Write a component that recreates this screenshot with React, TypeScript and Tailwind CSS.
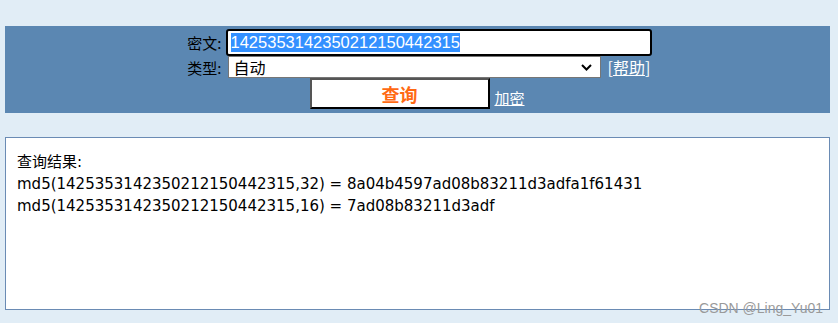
export default function App() {
  const cipher = "1425353142350212150442315";
  return (
    <div className="h-[323px] w-[838px] overflow-hidden bg-[#e1edf6] pt-[26px] font-['Noto_Sans_CJK_SC',sans-serif] text-[14px] text-black">
      <div className="ml-[5px] flex h-[87px] w-[825px] justify-center bg-[#5b87b2]">
        <div className="flex w-[468px] flex-col pt-[3px]">
          <div className="flex h-[27px] items-center">
            <span className="w-[38px] text-right text-[15px] leading-none">密文:</span>
            <div className="ml-[4px] flex h-[27px] w-[426px] items-center rounded-[3px] border-2 border-black bg-white pl-[3px]">
              <span className="bg-[#3390ff] font-['Liberation_Sans',sans-serif] text-[16.5px] leading-[19px] text-white">
                {cipher}
              </span>
            </div>
          </div>
          <div className="flex h-[22px] items-center">
            <span className="w-[38px] text-right text-[15px] leading-none">类型:</span>
            <div className="ml-[6px] flex h-[22px] w-[373px] items-center justify-between border border-[#767676] bg-white pl-[5px] pr-[8px]">
              <span className="text-[16px] leading-none">自动</span>
              <svg width="11" height="7" viewBox="0 0 11 7">
                <path d="M1 1l4.5 4.5L10 1" fill="none" stroke="#000" strokeWidth="2" />
              </svg>
            </div>
            <span className="ml-[7px] text-[16px] leading-none text-white">
              [<span className="underline">帮助</span>]
            </span>
          </div>
          <div className="flex h-[31px] items-end">
            <button className="ml-[126px] h-[31px] w-[180px] border-2 border-b-black border-l-[#555] border-r-black border-t-[#555] bg-white text-[18px] font-bold leading-none text-[#ff6a13]">
              查询
            </button>
            <span className="mb-[4px] ml-[5px] text-[15px] leading-none text-white underline">加密</span>
          </div>
        </div>
      </div>
      <div className="relative ml-[5px] mt-[24px] h-[173px] w-[825px] border border-[#6a8bb4] bg-white px-[11px] pt-[13px] font-['DejaVu_Sans','Noto_Sans_CJK_SC',sans-serif] text-[15px] leading-[22px]">
        <div>查询结果:</div>
        <div>md5({cipher},32) = 8a04b4597ad08b83211d3adfa1f61431</div>
        <div>md5({cipher},16) = 7ad08b83211d3adf</div>
        <span className="absolute bottom-[-6px] right-[6px] font-['Liberation_Sans',sans-serif] text-[14px] leading-none text-[#9a9a9a]">
          CSDN @Ling_Yu01
        </span>
      </div>
    </div>
  );
}
